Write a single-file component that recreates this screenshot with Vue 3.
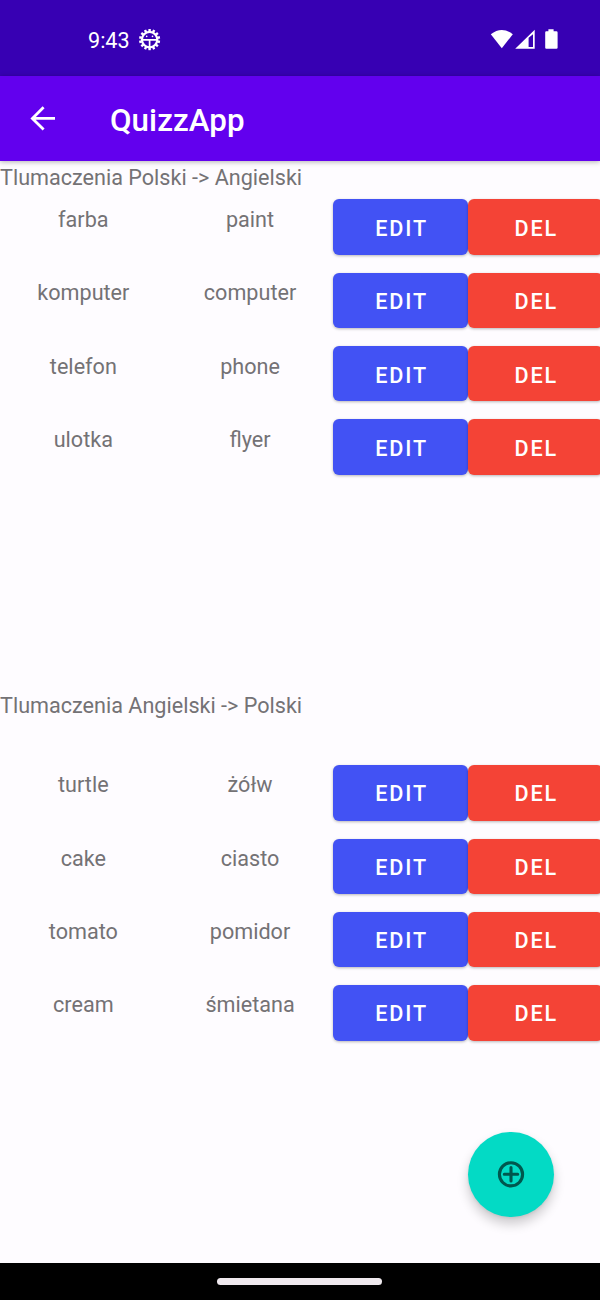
<script setup>
const sections = [
  {
    title: 'Tlumaczenia Polski -> Angielski',
    kind: 'first',
    rows: [['farba', 'paint'], ['komputer', 'computer'], ['telefon', 'phone'], ['ulotka', 'flyer']],
  },
  {
    title: 'Tlumaczenia Angielski -> Polski',
    kind: 'second',
    rows: [['turtle', 'żółw'], ['cake', 'ciasto'], ['tomato', 'pomidor'], ['cream', 'śmietana']],
  },
]
const teeth = Array.from({ length: 14 }, (_, i) => (i * 360) / 14)
</script>

<template>
  <div class="screen">
    <div class="status">
      <span class="time">9:43</span>
      <svg class="gear" width="22" height="22" viewBox="0 0 22 22">
        <circle cx="10.6" cy="10.6" r="7.7" fill="none" stroke="#fff" stroke-width="2.2" />
        <rect v-for="a in teeth" :key="a" x="9.4" y="0" width="2.4" height="2.6" fill="#fff" :transform="`rotate(${a} 10.6 10.6)`" />
        <path d="M3.2 10.9H18M10.6 10.9V18.2" stroke="#fff" stroke-width="1.7" />
        <circle cx="7.7" cy="7.4" r="0.8" fill="#fff" />
        <circle cx="13.5" cy="7.4" r="0.8" fill="#fff" />
      </svg>
      <span class="gap"></span>
      <svg width="70" height="22" viewBox="0 0 70 22" fill="#fff">
        <path d="M0.8 5.3Q11.8-3.5 22.8 5.3L11.8 19.3Z" />
        <path fill-rule="evenodd" d="M25.2 19.8L44.7 0.8V19.8ZM38.6 8.8V18H43V5.2Z" />
        <path d="M58.4 0.2H63.6V2.2H66.4Q67.6 2.2 67.6 3.4V18.7Q67.6 19.8 66.4 19.8H56.3Q55.2 19.8 55.2 18.7V3.4Q55.2 2.2 56.3 2.2H58.4Z" />
      </svg>
    </div>
    <header class="bar">
      <svg width="26" height="26" viewBox="0 0 26 26" fill="none" stroke="#fff" stroke-width="2.8">
        <path d="M25 13.4H3M13.6 2.2L2.4 13.4L13.6 24.6" />
      </svg>
      <h1>QuizzApp</h1>
    </header>
    <main>
      <section v-for="s in sections" :key="s.kind" :class="s.kind">
        <h2>{{ s.title }}</h2>
        <div v-for="r in s.rows" :key="r[0]" class="row">
          <span class="word">{{ r[0] }}</span>
          <span class="word">{{ r[1] }}</span>
          <button class="edit">EDIT</button>
          <button class="del">DEL</button>
        </div>
      </section>
    </main>
    <button class="fab">
      <svg width="28" height="28" viewBox="0 0 28 28" fill="none" stroke="#00574e">
        <circle cx="14" cy="14.3" r="11.6" stroke-width="3.1" />
        <path d="M14 7.6V21M7.3 14.3H20.7" stroke-width="3.1" stroke-linecap="round" />
      </svg>
    </button>
    <footer class="nav"><span class="pill"></span></footer>
  </div>
</template>

<style>
body {
  margin: 0;
}
</style>

<style scoped>
.screen {
  position: relative;
  width: 600px;
  height: 1300px;
  display: flex;
  flex-direction: column;
  overflow: hidden;
  background: #fefcff;
  font-family: Roboto, sans-serif;
}
.status {
  box-sizing: border-box;
  height: 75.6px;
  flex: none;
  display: flex;
  align-items: flex-start;
  padding: 29px 40px 0 88px;
  background: #3700b3;
  color: #fff;
}
.time {
  width: 51px;
  margin-top: -2px;
  font-size: 21.6px;
  line-height: 28px;
}
.gap {
  flex: 1;
}
.bar {
  box-sizing: border-box;
  height: 85.4px;
  flex: none;
  display: flex;
  padding: 29.4px 0 0 30px;
  background: #6200ee;
  color: #fff;
  box-shadow: 0 1px 5px rgba(0, 0, 0, 0.3);
}
h1 {
  margin: -3px 0 0 54px;
  font-size: 31.3px;
  line-height: 38px;
  font-weight: 500;
  letter-spacing: 0.06px;
}
main {
  flex: 1;
}
section {
  box-sizing: border-box;
  height: 529px;
}
h2 {
  box-sizing: border-box;
  height: 29.2px;
  margin: 0;
  padding-top: 3px;
  font-size: 21.6px;
  line-height: 28px;
  font-weight: 400;
  color: #747275;
}
.second h2 {
  height: 66.2px;
  padding-top: 2px;
}
.row {
  height: 73.33px;
  display: flex;
  align-items: flex-start;
}
.word {
  width: 166.7px;
  flex: none;
  padding-top: 15.8px;
  text-align: center;
  font-size: 21.6px;
  line-height: 28px;
  color: #747275;
}
.second .word {
  padding-top: 15px;
}
.row button {
  width: 134.6px;
  height: 55.3px;
  flex: none;
  margin: 9.2px 0 0;
  padding: 2.8px 0 0 2px;
  border: 0;
  border-radius: 6px;
  color: #fff;
  font: 500 21.6px/28px Roboto, sans-serif;
  letter-spacing: 0.0892857em;
  box-shadow: 0 1px 3px rgba(0, 0, 0, 0.28);
}
.first .row button {
  padding-top: 3.8px;
}
.row .edit {
  background: #4252f4;
}
.row .del {
  background: #f44336;
}
.fab {
  position: absolute;
  left: 468.2px;
  top: 1131.6px;
  width: 85.6px;
  height: 85.6px;
  display: flex;
  align-items: center;
  justify-content: center;
  padding: 0;
  border: 0;
  border-radius: 50%;
  background: #03dac5;
  box-shadow: 0 7px 12px rgba(0, 0, 0, 0.2), 0 1px 3px rgba(0, 0, 0, 0.08);
}
.nav {
  box-sizing: border-box;
  height: 37px;
  flex: none;
  display: flex;
  padding: 15px 0 0 217px;
  background: #000;
}
.pill {
  width: 165px;
  height: 6.6px;
  border-radius: 4px;
  background: #efe9ee;
}
</style>
